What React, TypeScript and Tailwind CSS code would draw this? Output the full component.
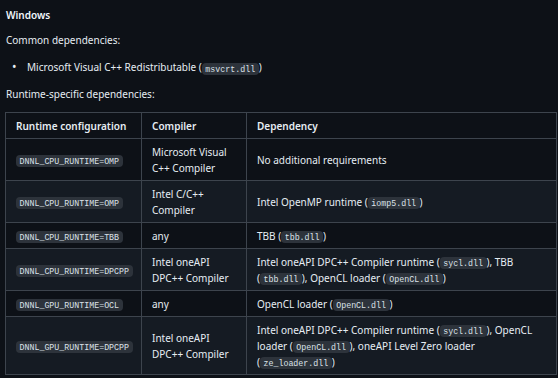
import React from "react";

const C = ({ children }: { children: React.ReactNode }) => (
  <code className="rounded-[4px] bg-[#2d333b] px-[3.5px] py-[1.5px] font-['Liberation_Mono'] text-[8.3px] leading-[10px] text-[#dce2e9]">
    {children}
  </code>
);

const rows: { cfg: string; comp: React.ReactNode; dep: React.ReactNode }[] = [
  {
    cfg: "DNNL_CPU_RUNTIME=OMP",
    comp: (
      <>
        Microsoft Visual
        <br />
        C++ Compiler
      </>
    ),
    dep: <>No additional requirements</>,
  },
  {
    cfg: "DNNL_CPU_RUNTIME=OMP",
    comp: (
      <>
        Intel C/C++
        <br />
        Compiler
      </>
    ),
    dep: (
      <>
        Intel OpenMP runtime (<C>iomp5.dll</C>)
      </>
    ),
  },
  {
    cfg: "DNNL_CPU_RUNTIME=TBB",
    comp: <>any</>,
    dep: (
      <>
        TBB (<C>tbb.dll</C>)
      </>
    ),
  },
  {
    cfg: "DNNL_CPU_RUNTIME=DPCPP",
    comp: (
      <>
        Intel oneAPI
        <br />
        DPC++ Compiler
      </>
    ),
    dep: (
      <>
        Intel oneAPI DPC++ Compiler runtime (<C>sycl.dll</C>), TBB
        <br />
        (<C>tbb.dll</C>), OpenCL loader (<C>OpenCL.dll</C>)
      </>
    ),
  },
  {
    cfg: "DNNL_GPU_RUNTIME=OCL",
    comp: <>any</>,
    dep: (
      <>
        OpenCL loader (<C>OpenCL.dll</C>)
      </>
    ),
  },
  {
    cfg: "DNNL_GPU_RUNTIME=DPCPP",
    comp: (
      <>
        Intel oneAPI
        <br />
        DPC++ Compiler
      </>
    ),
    dep: (
      <>
        Intel oneAPI DPC++ Compiler runtime (<C>sycl.dll</C>), OpenCL
        <br />
        loader (<C>OpenCL.dll</C>), oneAPI Level Zero loader
        <br />
        (<C>ze_loader.dll</C>)
      </>
    ),
  },
];

const cell = "border border-[#3d444d] px-[10px] py-[4.5px]";

export default function App() {
  return (
    <div className="h-[378px] w-[558px] overflow-hidden bg-[#0d1117] pl-[5px] pt-[7px] font-['Noto_Sans'] text-[10px] leading-[16px] text-[#e6edf3]">
      <div className="pl-[1px] font-semibold text-[#f0f6fc]">Windows</div>
      <p className="mt-[9px] pl-[1px]">Common dependencies:</p>
      <ul className="mt-[11px] pl-[7px]">
        <li className="flex items-center">
          <span className="w-[15px] text-[12px]">•</span>
          <span>
            Microsoft Visual C++ Redistributable (<C>msvcrt.dll</C>)
          </span>
        </li>
      </ul>
      <p className="mt-[11px] pl-[1px]">Runtime-specific dependencies:</p>
      <table className="mt-[10px] w-[552px] table-fixed border-collapse">
        <colgroup>
          <col className="w-[136px]" />
          <col className="w-[105px]" />
          <col />
        </colgroup>
        <thead>
          <tr>
            <th className={`${cell} whitespace-nowrap text-left font-semibold`}>Runtime configuration</th>
            <th className={`${cell} text-left font-semibold`}>Compiler</th>
            <th className={`${cell} text-left font-semibold`}>Dependency</th>
          </tr>
        </thead>
        <tbody>
          {rows.map((r, i) => (
            <tr key={i} className={i % 2 === 1 ? "bg-[#151b23]" : ""}>
              <td className={`${cell} whitespace-nowrap align-middle`}>
                <C>{r.cfg}</C>
              </td>
              <td className={`${cell} align-middle`}>{r.comp}</td>
              <td className={`${cell} whitespace-nowrap align-middle`}>{r.dep}</td>
            </tr>
          ))}
        </tbody>
      </table>
    </div>
  );
}
